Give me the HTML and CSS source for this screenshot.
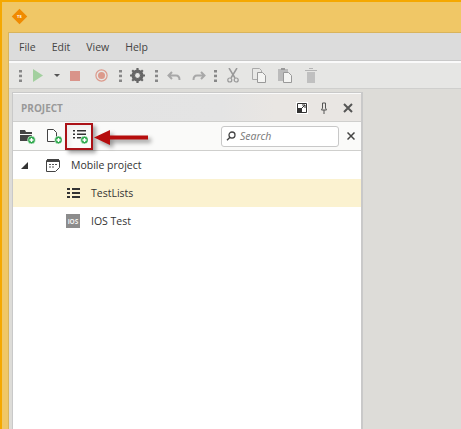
FILE: index.html
```html
<!DOCTYPE html>
<html>
<head>
    <title>Project</title>
    <link rel="stylesheet" href="styles.css">
</head>
<body>
    <div class="window">
        <div class="titlebar">
            <div class="logo"><span>TS</span></div>
        </div>
        <div class="client">
            <div class="menubar">
                <span>File</span><span>Edit</span><span>View</span><span>Help</span>
            </div>
            <div class="toolbar">
                <svg class="tb grip" width="3" height="12"><use href="#grip"/></svg>
                <svg class="tb play" width="10" height="13" viewBox="0 0 10 13"><path d="M0 0l10 6.500-10 6.500z" fill="#a3d09f"/></svg>
                <svg class="tb caret" width="6" height="3" viewBox="0 0 6 3"><path d="M0 0h6l-3 3z" fill="#555"/></svg>
                <div class="tb stop"></div>
                <svg class="tb rec" width="13" height="13" viewBox="0 0 13 13"><circle cx="6.500" cy="6.500" r="5.600" fill="none" stroke="#dc9a8c" stroke-width="1.200"/><circle cx="6.500" cy="6.500" r="3.500" fill="#dc9a8c"/></svg>
                <svg class="tb grip g2" width="3" height="12"><use href="#grip"/></svg>
                <svg class="tb gear" width="15" height="15" viewBox="0 0 15 15"><circle cx="7.500" cy="7.500" r="4.500" fill="none" stroke="#666" stroke-width="3"/><path d="M7.500 0v15M0 7.500h15M2.200 2.200l10.600 10.600M12.800 2.200L2.200 12.800" stroke="#666" stroke-width="2.200"/><circle cx="7.500" cy="7.500" r="2.400" fill="#e6e6e4"/></svg>
                <svg class="tb grip g3" width="3" height="12"><use href="#grip"/></svg>
                <svg class="tb undo" width="14" height="10" viewBox="0 0 14 10"><path d="M5 1L1.500 4.500 5 8M2 4.500h7c2.500 0 3.500 1.500 3.500 4.500" fill="none" stroke="#a8a8a8" stroke-width="2"/></svg>
                <svg class="tb redo" width="14" height="10" viewBox="0 0 14 10"><path d="M9 1l3.500 3.500L9 8M12 4.500H5C2.500 4.500 1.500 6 1.500 9" fill="none" stroke="#a8a8a8" stroke-width="2"/></svg>
                <svg class="tb grip g4" width="3" height="12"><use href="#grip"/></svg>
                <svg class="tb cut" width="12" height="15" viewBox="0 0 12 15"><path d="M2 0l6 10M10 0L4 10" stroke="#999" stroke-width="1.500"/><circle cx="2.800" cy="12" r="2" fill="none" stroke="#999" stroke-width="1.200"/><circle cx="9.200" cy="12" r="2" fill="none" stroke="#999" stroke-width="1.200"/></svg>
                <svg class="tb copy" width="14" height="15" viewBox="0 0 14 15"><path d="M.5.500h7l2 2v9h-9z" fill="#e8e8e6" stroke="#aaa"/><path d="M5.500 4.500h5l3 3v7h-8z" fill="#f4f4f2" stroke="#999"/></svg>
                <svg class="tb paste" width="14" height="15" viewBox="0 0 14 15"><path d="M0 1h10v12H0z" fill="#bbb"/><path d="M3 0h4v2H3z" fill="#999"/><path d="M5.500 4.500h5l3 3v7h-8z" fill="#f4f4f2" stroke="#999"/></svg>
                <svg class="tb trash" width="12" height="15" viewBox="0 0 12 15"><path d="M4 0h4v1H4zM0 2h12v1H0z" fill="#b4b4b4"/><path d="M2 4h8v11H2z" fill="#c0c0c0"/></svg>
            </div>
            <div class="workspace">
                <div class="panel">
                    <div class="panel-head">
                        <span class="panel-title">PROJECT</span>
                        <svg class="restore" width="12" height="12" viewBox="0 0 12 12"><path d="M0 0h12v12H0z" fill="#fff"/><path d="M1.500 1.500h9v9h-9z" fill="none" stroke="#333"/><path d="M1 6h5v5H1z" fill="#333"/><path d="M5.500 6.500L9 3M6 3h3v3" fill="none" stroke="#333"/></svg>
                        <svg class="pin" width="8" height="12" viewBox="0 0 8 12"><path d="M2.500 1h3v5l1 2h-5l1-2z" fill="none" stroke="#555"/><path d="M4 8v4" stroke="#555"/></svg>
                        <svg class="close" width="10" height="10" viewBox="0 0 10 10"><path d="M1 1l8 8M9 1L1 9" stroke="#555" stroke-width="2"/></svg>
                    </div>
                    <div class="panel-tools">
                        <svg class="add-folder" width="16" height="15" viewBox="0 0 16 15"><path d="M0 1h5l1 2h6v2H0zM0 6h12v6H0z" fill="#444"/><use href="#plus"/></svg>
                        <svg class="add-file" width="15" height="15" viewBox="0 0 15 15"><path d="M.5.500h6l3 3v9h-9z" fill="#fff" stroke="#444"/><use href="#plus"/></svg>
                        <svg class="add-list" width="15" height="15" viewBox="0 0 15 15"><use href="#bullets-thin"/><use href="#plus"/></svg>
                        <div class="search">
                            <svg width="10" height="10" viewBox="0 0 10 10"><circle cx="6" cy="4" r="3" fill="none" stroke="#444" stroke-width="1.300"/><path d="M4 6.200L1 9.200" stroke="#444" stroke-width="1.500"/></svg>
                            <span>Search</span>
                        </div>
                        <svg class="clear" width="8" height="8" viewBox="0 0 8 8"><path d="M.5.500l7 7M7.500.500l-7 7" stroke="#444" stroke-width="1.500"/></svg>
                    </div>
                    <div class="tree">
                        <div class="row root">
                            <svg class="twist" width="7" height="7" viewBox="0 0 7 7"><path d="M7 0v7H0z" fill="#333"/></svg>
                            <svg class="device" width="14" height="14" viewBox="0 0 14 14"><path d="M.5 2.500h13v7l-4 4h-9z" fill="#fff" stroke="#444"/><path d="M1 1h12v3H1z" fill="#444"/><path d="M3 6h2v1H3zM6 6h2v1H6zM9 6h2v1H9zM3 8.500h2v1H3zM6 8.500h2v1H6z" fill="#555"/></svg>
                            <span>Mobile project</span>
                        </div>
                        <div class="row child selected">
                            <svg class="ico" width="13" height="14" viewBox="0 0 13 14"><use href="#bullets"/></svg>
                            <span>TestLists</span>
                        </div>
                        <div class="row child">
                            <div class="ios">iOS</div>
                            <span>IOS Test</span>
                        </div>
                    </div>
                </div>
            </div>
        </div>
    </div>

    <!-- annotation over the screenshot -->
    <div class="callout"></div>
    <svg class="arrow" width="56" height="19" viewBox="0 0 56 19">
        <path d="M17 7.500h38v4H17zM17 2L1 9.500 17 17z" fill="#b60d0d"/>
    </svg>

    <svg class="defs" width="0" height="0">
        <defs>
            <g id="grip" fill="#888"><rect width="3" height="2.500"/><rect y="4.700" width="3" height="2.500"/><rect y="9.500" width="3" height="2.500"/></g>
            <g id="bullets" fill="#333"><rect y="2" width="3" height="2"/><rect x="5" y="2" width="8" height="2"/><rect y="6" width="3" height="2"/><rect x="5" y="6" width="8" height="2"/><rect y="10" width="3" height="2"/><rect x="5" y="10" width="8" height="2"/></g>
            <g id="bullets-thin" fill="#333"><rect y="1" width="2" height="1.500"/><rect x="4" y="1" width="9" height="1.500"/><rect y="4.500" width="2" height="1.500"/><rect x="4" y="4.500" width="9" height="1.500"/><rect y="8" width="2" height="1.500"/><rect x="4" y="8" width="5" height="1.500"/></g>
            <g id="plus"><circle cx="11.500" cy="11" r="3.900" fill="#2da84b" stroke="#fff" stroke-width=".6"/><path d="M9.500 11h4M11.500 9v4" stroke="#fff" stroke-width="1.400"/></g>
        </defs>
    </svg>
</body>
</html>
```

FILE: styles.css
```css
html, body { margin: 0; padding: 0; height: 100%; overflow: hidden; }
body { font-family: "Open Sans", "Noto Sans", sans-serif; font-size: 10.5px; color: #333; background: #f0c766; }

.window { height: 427px; display: flex; flex-direction: column; border: solid #f5a800; border-width: 2px 0 0 2px; }
.titlebar { height: 30px; padding-left: 9px; display: flex; align-items: center; box-sizing: border-box; flex: none; }
.logo { width: 11px; height: 11px; margin: -1px 0 0 3px; background: #f08a00; transform: rotate(45deg); display: flex; align-items: center; justify-content: center; }
.logo span { transform: rotate(-45deg); font-size: 4px; font-weight: 700; color: #fff; }

.client { flex: 1; margin-left: 6px; display: flex; flex-direction: column; background: #dcdcdc; border-top: 1px solid #d9b45c; border-left: 1px solid #d9b45c; min-height: 0; }

.menubar { height: 28px; padding-left: 10px; display: flex; align-items: center; gap: 16px; font-size: 10.5px; color: #444; flex: none; }

.toolbar { height: 25px; flex: none; display: flex; align-items: center; padding-left: 10px; background: #e6e6e4; border-top: 2px solid #fafafa; border-bottom: 1px solid #cfcfcd; box-shadow: 0 -1px 0 #c9c9c9; }
.tb { flex: none; }
.play { margin-left: 11px; }
.caret { margin-left: 11px; }
.stop { width: 10px; height: 10px; margin-left: 10px; background: #d9948a; }
.rec { margin-left: 15px; }
.g2 { margin-left: 11px; }
.gear { margin-left: 8px; }
.g3 { margin-left: 10px; }
.undo { margin-left: 9px; }
.redo { margin-left: 11px; }
.g4 { margin-left: 8px; }
.cut { margin-left: 10px; }
.copy { margin-left: 13px; }
.paste { margin-left: 12px; }
.trash { margin-left: 13px; }

.workspace { flex: 1; padding: 3px 0 0 3px; background: #dddcd8; display: flex; min-height: 0; }
.panel { width: 348px; background: #fff; display: flex; flex-direction: column; border: solid #c9c9c9; border-width: 1px 2px 0 1px; }

.panel-head { height: 29px; flex: none; box-sizing: border-box; display: flex; align-items: center; padding-left: 8px; background: linear-gradient(to right, #e3e3e3, #e4e4e4 60%, #e9e6e3 75%); border-top: 1px solid #fafafa; border-bottom: 1px solid #cfcfcd; }
.panel-title { font-size: 10px; font-weight: 700; color: #999; flex: 1; }
.restore { margin-right: 12px; }
.pin { margin-right: 15px; }
.close { margin-right: 8px; }

.panel-tools { height: 29px; flex: none; box-sizing: border-box; display: flex; align-items: center; padding-left: 7px; background: #fafaf9; border-bottom: 1px solid #cfcfcd; }
.add-file { margin-left: 11px; }
.add-list { margin-left: 11px; }
.search { width: 118px; height: 21px; margin-left: 133px; box-sizing: border-box; display: flex; align-items: center; gap: 4px; padding-left: 4px; background: #fff; border: 1px solid #c8c8c8; border-radius: 3px; font-size: 10.5px; font-style: italic; color: #777; }
.clear { margin-left: 8px; }

.tree { flex: 1; }
.row { height: 28px; display: flex; align-items: center; font-size: 10.5px; color: #333; }
.root { padding-left: 8px; }
.twist { margin-right: 18px; }
.device { margin-right: 11px; }
.child { padding-left: 53px; }
.selected { background: #fbf2d0; }
.ico { margin: 0 11px 0 1px; }
.ios { width: 14px; height: 14px; margin-right: 11px; background: #8c8c8c; color: #eee; font-size: 6.5px; font-weight: 700; display: flex; align-items: center; justify-content: center; }

.callout { position: absolute; left: 65px; top: 123px; width: 24px; height: 23px; border: 2px solid #ab1217; box-shadow: 3px 3px 4px rgba(0, 0, 0, .35), inset 3px 3px 4px rgba(0, 0, 0, .05); }
.arrow { position: absolute; left: 93px; top: 128px; overflow: visible; filter: drop-shadow(3px 3px 2px rgba(0, 0, 0, .4)); }
.defs { position: absolute; }
```
